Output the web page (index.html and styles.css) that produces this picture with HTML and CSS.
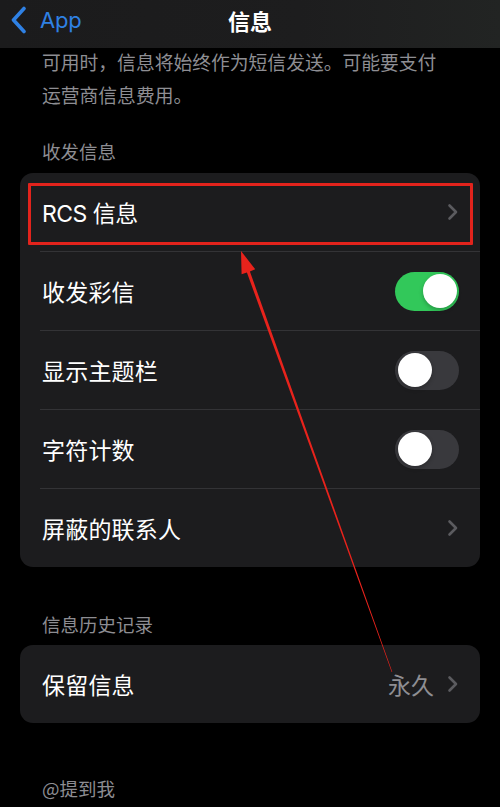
FILE: index.html
```html
<!DOCTYPE html>
<html lang="zh-CN">
<head>
<meta charset="utf-8">
<title>信息</title>
<link rel="stylesheet" href="styles.css">
</head>
<body>
<div class="screen">
  <header class="nav">
    <div class="back">
      <svg class="back-icon" width="18" height="28" viewBox="0 0 18 28"><polyline points="14,2.5 3.5,14 14,25.5" fill="none" stroke="#2f81e4" stroke-width="3.6" stroke-linecap="round" stroke-linejoin="round"/></svg>
      <span class="back-text">App</span>
    </div>
    <div class="title">信息</div>
    <div></div>
  </header>

  <main class="content">
    <p class="note">可用时，信息将始终作为短信发送。可能要支付<br>运营商信息费用。</p>

    <div class="section-title first">收发信息</div>
    <div class="card">
      <div class="row highlight">
        <span class="label">RCS 信息</span>
        <svg class="chev" width="12" height="18" viewBox="0 0 12 18"><polyline points="2.5,2.5 9,9 2.5,15.5" fill="none" stroke="#5b5b5f" stroke-width="2.6" stroke-linecap="round" stroke-linejoin="round"/></svg>
        <span class="mark"></span>
      </div>
      <div class="sep"></div>
      <div class="row">
        <span class="label">收发彩信</span>
        <span class="toggle on"><span class="knob"></span></span>
      </div>
      <div class="sep"></div>
      <div class="row">
        <span class="label">显示主题栏</span>
        <span class="toggle"><span class="knob"></span></span>
      </div>
      <div class="sep"></div>
      <div class="row">
        <span class="label">字符计数</span>
        <span class="toggle"><span class="knob"></span></span>
      </div>
      <div class="sep"></div>
      <div class="row">
        <span class="label">屏蔽的联系人</span>
        <svg class="chev" width="12" height="18" viewBox="0 0 12 18"><polyline points="2.5,2.5 9,9 2.5,15.5" fill="none" stroke="#5b5b5f" stroke-width="2.6" stroke-linecap="round" stroke-linejoin="round"/></svg>
      </div>
    </div>

    <div class="section-title second">信息历史记录</div>
    <div class="card">
      <div class="row">
        <span class="label">保留信息</span>
        <span class="value">永久</span>
        <svg class="chev" width="12" height="18" viewBox="0 0 12 18"><polyline points="2.5,2.5 9,9 2.5,15.5" fill="none" stroke="#5b5b5f" stroke-width="2.6" stroke-linecap="round" stroke-linejoin="round"/></svg>
      </div>
    </div>

    <div class="section-title third">@提到我</div>
  </main>

  <svg class="arrow" width="500" height="807" viewBox="0 0 500 807">
    <polygon points="241,251 255.2,269.3 249.9,271.4 392.3,671.9 391.7,672.1 246.9,272.4 241.6,274.3" fill="#e8231c"/>
  </svg>
</div>
</body>
</html>
```

FILE: styles.css
```css
* { box-sizing: border-box; }

html, body {
  margin: 0;
  padding: 0;
  background: #000;
}

body {
  font-family: "Inter", "Noto Sans CJK SC", sans-serif;
  color: #fff;
}

.screen {
  position: relative;
  width: 500px;
  height: 807px;
  overflow: hidden;
  background: #000;
}

.nav {
  height: 48px;
  background: linear-gradient(90deg, #1b1b1c 0%, #1d1d1e 60%, #222423 100%);
  display: grid;
  grid-template-columns: 1fr auto 1fr;
  align-items: center;
  position: relative;
  z-index: 2;
}

.back {
  display: flex;
  align-items: center;
  padding-left: 10px;
  height: 48px;
  padding-bottom: 8px;
}

.back-icon { display: block; }

.back-text {
  font-family: "Inter", sans-serif;
  font-size: 22px;
  color: #2f81e4;
  margin-left: 12px;
  letter-spacing: -0.2px;
}

.title {
  font-family: "Noto Sans CJK SC", sans-serif;
  font-size: 22px;
  font-weight: 700;
  color: #fff;
  padding-bottom: 8px;
}

.note {
  margin: -3px 0 0 0;
  padding-left: 42px;
  font-family: "Noto Sans CJK SC", sans-serif;
  font-size: 18.8px;
  line-height: 33px;
  color: #8e8e93;
}

.section-title {
  padding-left: 42px;
  font-family: "Noto Sans CJK SC", sans-serif;
  font-size: 18.5px;
  line-height: 24px;
  color: #8d8d92;
}

.section-title.first { margin-top: 28px; margin-bottom: 10px; }
.section-title.second { margin-top: 45px; margin-bottom: 9px; }
.section-title.third { margin-top: 53px; }

.card {
  margin: 0 20px;
  background: #1c1c1e;
  border-radius: 13px;
}

.row {
  position: relative;
  height: 78px;
  display: flex;
  align-items: center;
  padding: 0 21px 0 22px;
}

.label {
  flex: 1;
  font-family: "Inter", "Noto Sans CJK SC", sans-serif;
  font-size: 23px;
  color: #fff;
  letter-spacing: 0.2px;
}

.highlight .label { letter-spacing: -0.5px; }

.sep {
  height: 1px;
  margin-left: 20px;
  background: #333336;
}

.chev { display: block; }

.value {
  font-family: "Noto Sans CJK SC", sans-serif;
  font-size: 23px;
  color: #8e8e93;
  margin-right: 13px;
}

.toggle {
  position: relative;
  width: 64px;
  height: 39px;
  border-radius: 20px;
  background: #39393d;
  margin-right: 0;
}

.toggle.on { background: #32c85a; }

.knob {
  position: absolute;
  top: 2.5px;
  left: 2.5px;
  width: 34px;
  height: 34px;
  border-radius: 50%;
  background: #fff;
  box-shadow: 0 2px 4px rgba(0,0,0,0.25);
}

.toggle.on .knob { left: 27.5px; }

.mark {
  position: absolute;
  top: 10px;
  left: 8px;
  right: 7px;
  bottom: 6px;
  border: 3px solid #e2231c;
  border-radius: 1px;
  pointer-events: none;
}

.arrow {
  position: absolute;
  left: 0;
  top: 0;
  pointer-events: none;
  z-index: 3;
}
```
